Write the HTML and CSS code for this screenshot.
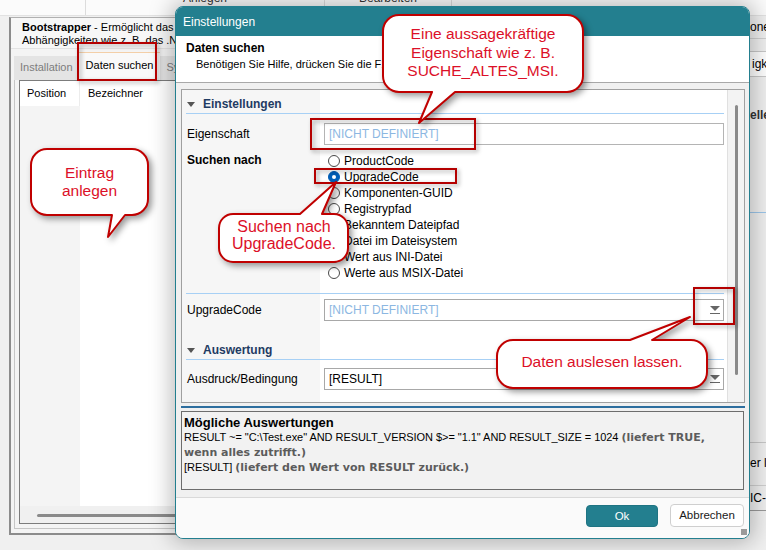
FILE: index.html
```html
<!DOCTYPE html>
<html lang="de">
<head>
<meta charset="utf-8">
<title>Einstellungen</title>
<link rel="stylesheet" href="styles.css">
</head>
<body>
<div class="app">
  <div class="colhead">
    <div class="ch c1"></div>
    <div class="ch c2"><span>Anlegen</span></div>
    <div class="ch c3"><span>Bearbeiten</span></div>
    <div class="ch c4"></div>
  </div>
  <div class="work">
    <div class="mainpanel">
      <div class="desc"><b>Bootstrapper</b> - Ermöglicht das Installieren von Voraussetzungen<br>Abhängigkeiten wie z. B. das .NET Framework</div>
      <div class="tabs">
        <div class="tab">Installation</div>
        <div class="tab active">Daten suchen</div>
        <div class="tab">System</div>
      </div>
      <div class="frame">
        <div class="list">
          <div class="lhead"><div class="lc1">Position</div><div class="lc2">Bezeichner</div></div>
          <div class="lbody"><div class="lc1"></div><div class="lc2"></div></div>
          <div class="hscroll"><div class="hthumb"></div></div>
        </div>
      </div>
    </div>
    <div class="rightpanel">
      <div class="rp r1">onen</div>
      <div class="rp r2">igkeiten</div>
      <div class="rp r3">ellen</div>
      <div class="rp r4"></div>
      <div class="rp r5">er li</div>
      <div class="rp r6">IC-</div>
    </div>
  </div>
</div>

<div class="dialog">
  <div class="titlebar">Einstellungen</div>
  <div class="dhead">
    <div class="dh-title">Daten suchen</div>
    <div class="dh-sub">Benötigen Sie Hilfe, drücken Sie die F1-Taste.</div>
  </div>
  <div class="grid">
    <div class="pg">
      <div class="sec"><span class="tri"></span>Einstellungen</div>
      <div class="row r-eig">
        <div class="lbl">Eigenschaft</div>
        <div class="tbox ph">[NICHT DEFINIERT]</div>
      </div>
      <div class="row r-such">
        <div class="lbl bold">Suchen nach</div>
        <div class="radios">
          <div class="radio"><span class="rc"></span>ProductCode</div>
          <div class="radio sel"><span class="rc"></span>UpgradeCode</div>
          <div class="radio"><span class="rc"></span>Komponenten-GUID</div>
          <div class="radio"><span class="rc"></span>Registrypfad</div>
          <div class="radio"><span class="rc"></span>Bekanntem Dateipfad</div>
          <div class="radio"><span class="rc"></span>Datei im Dateisystem</div>
          <div class="radio"><span class="rc"></span>Wert aus INI-Datei</div>
          <div class="radio"><span class="rc"></span>Werte aus MSIX-Datei</div>
        </div>
      </div>
      <div class="row r-up">
        <div class="lbl">UpgradeCode</div>
        <div class="tbox combo ph">[NICHT DEFINIERT]<span class="arrow"></span></div>
      </div>
      <div class="sec sec2"><span class="tri"></span>Auswertung</div>
      <div class="row r-aus">
        <div class="lbl">Ausdruck/Bedingung</div>
        <div class="tbox combo">[RESULT]<span class="arrow"></span></div>
      </div>
    </div>
    <div class="vscroll"><div class="vthumb"></div></div>
  </div>
  <div class="splitter"></div>
  <div class="info">
    <div class="info-title">Mögliche Auswertungen</div>
    <div class="code">RESULT ~= "C:\Test.exe" AND RESULT_VERSION $&gt;= "1.1" AND RESULT_SIZE = 1024 <span class="note">(liefert TRUE,</span></div>
    <div class="code"><span class="note">wenn alles zutrifft.)</span></div>
    <div class="code">[RESULT] <span class="note">(liefert den Wert von RESULT zurück.)</span></div>
  </div>
  <div class="footer">
    <div class="btn ok">Ok</div>
    <div class="btn cancel">Abbrechen</div>
    <div class="grip"></div>
  </div>
</div>

<svg class="overlay" width="766" height="550" viewBox="0 0 766 550" xmlns="http://www.w3.org/2000/svg">
  <g class="marks" fill="none" stroke="#b40000" stroke-width="2">
    <rect x="78" y="43" width="78" height="37"/>
    <rect x="311" y="119" width="164" height="30"/>
    <rect x="315" y="169" width="141" height="14"/>
    <rect x="694" y="288" width="40" height="36"/>
  </g>
  <g class="bubbles" fill="#fff" stroke="#c00000" stroke-width="2" stroke-linejoin="round">
    <path d="M399,15 H567 A16,16 0 0 1 583,31 V76 A16,16 0 0 1 567,92 H455 L419,123 L432,92 H399 A16,16 0 0 1 383,76 V31 A16,16 0 0 1 399,15 Z"/>
    <path d="M47,149 H132 A16,16 0 0 1 148,165 V199 A16,16 0 0 1 132,215 H125 L108,237 L112,215 H47 A16,16 0 0 1 31,199 V165 A16,16 0 0 1 47,149 Z"/>
    <path d="M233,214 H300 L336,182 L322,214 H334 A14,14 0 0 1 348,228 V248 A14,14 0 0 1 334,262 H233 A14,14 0 0 1 219,248 V228 A14,14 0 0 1 233,214 Z"/>
    <path d="M513,340 H630 L690,317 L652,340 H691 A16,16 0 0 1 707,356 V372 A16,16 0 0 1 691,388 H513 A16,16 0 0 1 497,372 V356 A16,16 0 0 1 513,340 Z"/>
  </g>
</svg>

<div class="ctext ct1">Eine aussagekräftige<br>Eigenschaft wie z. B.<br>SUCHE_ALTES_MSI.</div>
<div class="ctext ct2">Eintrag<br>anlegen</div>
<div class="ctext ct3">Suchen nach<br>UpgradeCode.</div>
<div class="ctext ct4">Daten auslesen lassen.</div>
</body>
</html>
```

FILE: styles.css
```css
* { box-sizing: border-box; }
html, body { margin: 0; padding: 0; }
body {
  width: 766px;
  height: 550px;
  overflow: hidden;
  position: relative;
  background: #f0f0f0;
  font-family: "Liberation Sans", Arial, sans-serif;
  font-size: 11px;
  color: #000;
}

/* ---------- background application ---------- */
.app { width: 766px; height: 550px; display: flex; flex-direction: column; }
.colhead {
  height: 16px;
  display: flex;
  background: #fbfbfb;
  border-bottom: 1px solid #e2e2e2;
  overflow: hidden;
  flex: none;
}
.ch { border-right: 1px solid #dcdcdc; text-align: center; color: #333; font-size: 12px; line-height: 14px; }
.ch span { display: block; margin-top: -9px; }
.c1 { width: 86px; }
.c2 { width: 239px; }
.c3 { width: 127px; }
.c4 { flex: 1; border-right: none; }

.work { flex: 1; display: flex; padding-top: 1px; }
.mainpanel {
  width: 740px;
  height: 518px;
  margin-left: 9px;
  border: 1px solid #b0b0b0;
  border-left: 2px solid #8c8c8c;
  border-bottom: 2px solid #8c8c8c;
  background: #f4f4f4;
  display: flex;
  flex-direction: column;
  overflow: hidden;
}
.desc {
  height: 31px;
  padding: 3px 0 0 11px;
  line-height: 13px;
  white-space: nowrap;
  overflow: hidden;
  background: #f7f7f7;
  border-bottom: 1px solid #e3e3e3;
  flex: none;
}
.tabs { height: 31px; display: flex; align-items: flex-end; padding-left: 3px; flex: none; }
.tab {
  height: 24px;
  line-height: 22px;
  padding: 0 6px;
  background: #e4e4e4;
  color: #7d7d7d;
  white-space: nowrap;
}
.tab.active {
  height: 28px;
  line-height: 24px;
  background: #f9f9f9;
  color: #000;
  border-top: 1px solid #f3cfa8;
  padding: 0 7px;
}
.frame {
  flex: 1;
  margin: 0 0 4px 3px;
  border-left: 1px solid #c6c6c6;
  border-bottom: 1px solid #c6c6c6;
  padding: 0 0 4px 4px;
  display: flex;
}
.list {
  flex: 1;
  border: 1px solid #7c7c7c;
  border-right: none;
  display: flex;
  flex-direction: column;
  background: #fff;
}
.lhead { height: 25px; display: flex; line-height: 25px; flex: none; }
.lc1 { width: 60px; padding-left: 7px; border-right: 1px solid #ececec; }
.lc2 { flex: 1; padding-left: 8px; }
.lbody { flex: 1; display: flex; }
.lbody .lc1 { background: #f4f4f4; border-right: none; }
.hscroll { height: 17px; background: #f0f0f0; padding: 8px 0 0 17px; flex: none; }
.hthumb { height: 3px; background: #8a8a8a; border-radius: 2px; width: 600px; }

.rightpanel { flex: 1; display: flex; flex-direction: column; overflow: hidden; white-space: nowrap; font-size: 12px; }
.rp { padding-left: 1px; overflow: hidden; flex: none; }
.r1 { height: 22px; line-height: 20px; border-bottom: 1px solid #d0d0d0; }
.r2 { height: 26px; margin-top: 12px; line-height: 24px; background: #fff; border: 1px solid #c8c8c8; border-right: none; padding-left: 2px; }
.r3 { height: 22px; margin-top: 27px; line-height: 22px; font-weight: bold; color: #333; }
.r4 { height: 231px; margin-top: 86px; border-top: 1px solid #9cc6ea; border-bottom: 1px solid #c8c8c8; }
.r5 { height: 40px; line-height: 40px; }
.r6 { height: 26px; margin-top: 2px; line-height: 24px; border-top: 1px solid #d0d0d0; border-bottom: 1px solid #9a9a9a; }

/* ---------- dialog ---------- */
.dialog {
  position: absolute;
  left: 175px;
  top: 6px;
  width: 575px;
  height: 533px;
  border: 1px solid #237f8f;
  border-radius: 8px;
  overflow: hidden;
  background: #f0f0f0;
  box-shadow: 0 0 22px 4px rgba(0, 0, 0, 0.26);
  display: flex;
  flex-direction: column;
}
.titlebar {
  height: 29px;
  flex: none;
  background: #237f8f;
  color: #fff;
  font-size: 12px;
  padding-left: 7px;
  display: flex;
  align-items: center;
}
.dhead {
  height: 47px;
  flex: none;
  background: #fff;
  border-bottom: 1px solid #a8a8a8;
  padding: 5px 0 0 10px;
}
.dh-title { font-weight: bold; font-size: 12px; line-height: 14px; }
.dh-sub { margin: 2px 0 0 10px; line-height: 14px; white-space: nowrap; }

.grid {
  height: 314px;
  flex: none;
  margin: 6px 4px 0 5px;
  border: 1px solid #a0a0a0;
  display: flex;
  background: #fff;
}
.pg {
  flex: 1;
  background: linear-gradient(to right, #f6f6f6 138px, #fff 138px);
  font-size: 12px;
}
.sec {
  margin: 0 3px 0 4px;
  height: 24px;
  padding-top: 5px;
  border-bottom: 1px solid #a7d0f5;
  display: flex;
  align-items: center;
  font-weight: bold;
  color: #1f3b63;
}
.tri {
  width: 0;
  height: 0;
  border-left: 4px solid transparent;
  border-right: 4px solid transparent;
  border-top: 5px solid #555;
  margin: 0 8px 0 1px;
}
.sec2 { margin-top: 15px; }
.row { display: flex; align-items: flex-start; }
.lbl { width: 142px; padding-left: 5px; flex: none; line-height: 22px; }
.lbl.bold { font-weight: bold; line-height: 14px; }
.r-eig { padding-top: 9px; }
.r-such { padding-top: 8px; padding-bottom: 12px; margin: 0 3px 0 4px; border-bottom: 1px solid #a7d0f5; }
.r-such .lbl { width: 138px; padding-left: 1px; }
.r-up { padding-top: 5px; }
.r-aus { padding-top: 8px; }
.tbox {
  flex: 1;
  height: 22px;
  margin-right: 3px;
  border: 1px solid #b4b4b4;
  background: #fff;
  padding-left: 4px;
  line-height: 20px;
  position: relative;
}
.ph { color: #8cb7e2; }
.combo { border-color: #a8a8a8; }
.arrow {
  position: absolute;
  right: 3px;
  top: 6px;
  width: 10px;
  height: 8px;
  border-bottom: 1px solid #666;
}
.arrow::before {
  content: "";
  position: absolute;
  left: 0;
  top: 0;
  border-left: 5px solid transparent;
  border-right: 5px solid transparent;
  border-top: 5px solid #666;
}
.radios { display: flex; flex-direction: column; padding-left: 4px; }
.radio { height: 16px; line-height: 16px; display: flex; align-items: center; white-space: nowrap; }
.rc {
  width: 12px;
  height: 12px;
  border: 1px solid #4a4a4a;
  border-radius: 50%;
  background: #fff;
  margin-right: 4px;
  flex: none;
}
.radio.sel .rc { background: #005fb8; border-color: #005fb8; position: relative; }
.radio.sel .rc::after {
  content: "";
  position: absolute;
  left: 3px;
  top: 3px;
  width: 4px;
  height: 4px;
  border-radius: 50%;
  background: #fff;
}
.vscroll { width: 17px; flex: none; background: #f3f3f3; border-left: 1px solid #e0e0e0; padding: 15px 0 0 7px; }
.vthumb { width: 3px; height: 270px; background: #8a8a8a; border-radius: 2px; }

.splitter { height: 2px; flex: none; margin: 3px 4px 0 5px; background: #2d6e9e; }
.info {
  height: 79px;
  flex: none;
  margin: 3px 5px 0 5px;
  border: 1px solid #6d6d6d;
  background: #f2f2f2;
  padding: 3px 2px 0 2px;
  line-height: 15px;
  font-size: 11px;
  white-space: nowrap;
}
.info-title { font-weight: bold; font-size: 13px; }
.code { letter-spacing: -0.05px; }
.note {
  font-family: "DejaVu Sans", Verdana, sans-serif;
  font-weight: bold;
  font-size: 11px;
  color: #5c5c5c;
  letter-spacing: 0;
}
.footer {
  flex: 1;
  margin-top: 7px;
  border-top: 1px solid #d9d9d9;
  background: #fafafa;
  display: flex;
  justify-content: flex-end;
  align-items: flex-start;
  padding: 7px 5px 0 0;
  gap: 12px;
  position: relative;
}
.btn { height: 22px; border-radius: 4px; text-align: center; line-height: 20px; font-size: 11.5px; }
.ok { width: 72px; background: #237f8f; color: #fff; border: 1px solid #1f7483; }
.cancel { width: 74px; height: 23px; background: #fff; color: #1a1a1a; border: 1px solid #cfcfcf; margin-top: -1px; }
.grip {
  position: absolute;
  right: 2px;
  bottom: 3px;
  width: 6px;
  height: 6px;
  background: radial-gradient(circle, #9a9a9a 0.8px, transparent 1px) 0 0 / 2px 2px;
}

/* ---------- annotations ---------- */
.overlay { position: absolute; left: 0; top: 0; }
.marks { filter: drop-shadow(2px 2px 2px rgba(0, 0, 0, 0.35)); }
.bubbles { filter: drop-shadow(3px 3px 3px rgba(0, 0, 0, 0.4)); }
.ctext {
  position: absolute;
  color: #dc1028;
  font-size: 15.5px;
  line-height: 18.5px;
  text-align: center;
  white-space: nowrap;
}
.ct1 { left: 383px; top: 25px; width: 200px; }
.ct2 { left: 31px; top: 164px; width: 117px; line-height: 18px; }
.ct3 { left: 219px; top: 218px; width: 130px; line-height: 17px; font-size: 16px; }
.ct4 { left: 497px; top: 353px; width: 210px; }
```
